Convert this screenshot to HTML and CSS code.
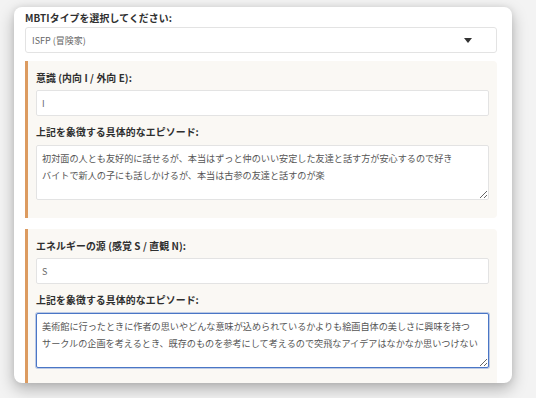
FILE: index.html
```html
<!DOCTYPE html>
<html lang="ja">
<head>
<meta charset="utf-8">
<link rel="stylesheet" href="styles.css">
</head>
<body>
<div class="page">
  <div class="card">
    <label class="label">MBTIタイプを選択してください:</label>
    <div class="select">
      <span>ISFP (冒険家)</span>
      <svg class="arrow" width="8" height="5" viewBox="0 0 8 5"><path d="M0 0 H8 L4 5 Z" fill="#333"/></svg>
    </div>

    <div class="section">
      <label class="label">意識 (内向 I / 外向 E):</label>
      <input class="input" type="text" value="I">
      <label class="label second">上記を象徴する具体的なエピソード:</label>
      <textarea class="textarea">初対面の人とも友好的に話せるが、本当はずっと仲のいい安定した友達と話す方が安心するので好き
バイトで新人の子にも話しかけるが、本当は古参の友達と話すのが楽</textarea>
    </div>

    <div class="section">
      <label class="label">エネルギーの源 (感覚 S / 直観 N):</label>
      <input class="input" type="text" value="S">
      <label class="label second">上記を象徴する具体的なエピソード:</label>
      <textarea class="textarea focused">美術館に行ったときに作者の思いやどんな意味が込められているかよりも絵画自体の美しさに興味を持つ
サークルの企画を考えるとき、既存のものを参考にして考えるので突飛なアイデアはなかなか思いつけない</textarea>
    </div>
  </div>
</div>
</body>
</html>
```

FILE: styles.css
```css
* { box-sizing: border-box; }
html, body {
  margin: 0;
  padding: 0;
  background: #f3f3f3;
  font-family: "Noto Sans CJK JP", "Noto Sans", sans-serif;
  overflow: hidden;
}
.page {
  padding: 7px 24px 0 14px;
  height: 398px;
}
.card {
  height: 376px;
  background: #fff;
  border-radius: 8px;
  box-shadow: 0 6px 16px rgba(0, 0, 0, 0.28), 0 0 6px rgba(0, 0, 0, 0.08);
  padding: 4px 15px 0 11px;
  overflow: hidden;
}
.label {
  display: block;
  font-size: 9.9px;
  line-height: 14px;
  font-weight: 700;
  color: #2f2f2f;
  letter-spacing: 0.1px;
  margin-bottom: 2px;
}
.select {
  height: 26px;
  border: 1px solid #e3e3e3;
  border-radius: 3px;
  background: #fff;
  display: flex;
  align-items: center;
  justify-content: space-between;
  padding: 0 24px 0 6px;
  font-size: 9px;
  color: #666;
  margin-bottom: 8px;
}
.arrow { display: block; }
.section {
  background: #faf8f4;
  border-left: 3px solid #dc9b60;
  border-radius: 0 4px 4px 0;
  padding: 10px 8px 18px 8px;
  margin-bottom: 11px;
}
.section .label { margin-bottom: 5px; }
.section .label.second { margin-bottom: 6px; }
.input {
  display: block;
  width: 100%;
  height: 26px;
  border: 1px solid #e3e3e3;
  border-radius: 2px;
  background: #fff;
  padding: 0 5px;
  font-family: inherit;
  font-size: 9px;
  color: #666;
  margin: 0 0 9px 0;
  outline: none;
}
.textarea {
  display: block;
  width: 100%;
  height: 55px;
  border: 1px solid #e3e3e3;
  border-radius: 2px;
  background: #fff;
  padding: 4px 5px;
  font-family: inherit;
  font-size: 9.15px;
  line-height: 17px;
  color: #555;
  margin: 0;
  resize: vertical;
  outline: none;
  overflow: hidden;
}
.textarea.focused {
  border: 1px solid #4a76c6;
  box-shadow: 0 0 0 1px rgba(74, 118, 198, 0.35);
}
```
